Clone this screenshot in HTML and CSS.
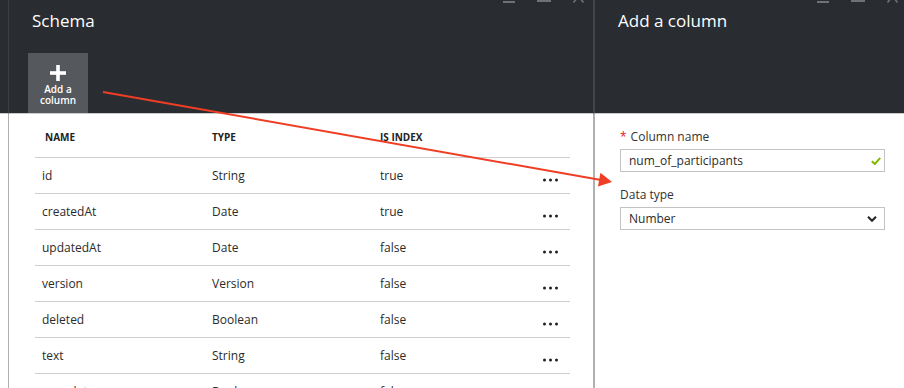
FILE: index.html
```html
<!DOCTYPE html>
<html lang="en">
<head>
    <meta charset="UTF-8">
    <meta name="viewport" content="width=device-width, initial-scale=1.0">
    <title>Schema - Add a column</title>
    <link rel="stylesheet" href="styles.css">
</head>
<body>

<div class="portal">
    <!-- Previous blade, only its edge is showing -->
    <div class="blade blade-stub">
        <div class="blade-header"></div>
        <div class="blade-body"></div>
    </div>

    <!-- Schema blade -->
    <div class="blade blade-schema">
        <div class="blade-header">
            <div class="blade-controls">
                <svg width="12" height="13" viewBox="0 0 12 13"><rect x="0" y="11" width="12" height="2" fill="currentColor"/></svg>
                <svg width="14" height="13" viewBox="0 0 14 13"><rect x="1" y="0" width="12" height="11" fill="none" stroke="currentColor" stroke-width="2"/></svg>
                <svg width="11" height="13" viewBox="0 0 11 13"><path d="M0.5 0 L10.5 12.5 M10.5 0 L0.5 12.5" stroke="currentColor" stroke-width="1.6"/></svg>
            </div>
            <h2 class="blade-title">Schema</h2>
            <button class="command-btn">
                <svg width="16" height="16" viewBox="0 0 16 16"><rect x="6.2" y="0" width="3.6" height="16" fill="#fff"/><rect x="0" y="6.2" width="16" height="3.6" fill="#fff"/></svg>
                <span>Add a<br>column</span>
            </button>
        </div>
        <div class="blade-body">
            <div class="schema-table">
                <div class="schema-row schema-head">
                    <div class="first">NAME</div>
                    <div>TYPE</div>
                    <div>IS INDEX</div>
                    <div></div>
                </div>
                <div class="schema-row">
                    <div>id</div><div>String</div><div>true</div>
                    <svg class="more" width="15" height="4" viewBox="0 0 15 4"><circle cx="1.5" cy="2" r="1.5"/><circle cx="7.5" cy="2" r="1.5"/><circle cx="13.5" cy="2" r="1.5"/></svg>
                </div>
                <div class="schema-row">
                    <div>createdAt</div><div>Date</div><div>true</div>
                    <svg class="more" width="15" height="4" viewBox="0 0 15 4"><circle cx="1.5" cy="2" r="1.5"/><circle cx="7.5" cy="2" r="1.5"/><circle cx="13.5" cy="2" r="1.5"/></svg>
                </div>
                <div class="schema-row">
                    <div>updatedAt</div><div>Date</div><div>false</div>
                    <svg class="more" width="15" height="4" viewBox="0 0 15 4"><circle cx="1.5" cy="2" r="1.5"/><circle cx="7.5" cy="2" r="1.5"/><circle cx="13.5" cy="2" r="1.5"/></svg>
                </div>
                <div class="schema-row">
                    <div>version</div><div>Version</div><div>false</div>
                    <svg class="more" width="15" height="4" viewBox="0 0 15 4"><circle cx="1.5" cy="2" r="1.5"/><circle cx="7.5" cy="2" r="1.5"/><circle cx="13.5" cy="2" r="1.5"/></svg>
                </div>
                <div class="schema-row">
                    <div>deleted</div><div>Boolean</div><div>false</div>
                    <svg class="more" width="15" height="4" viewBox="0 0 15 4"><circle cx="1.5" cy="2" r="1.5"/><circle cx="7.5" cy="2" r="1.5"/><circle cx="13.5" cy="2" r="1.5"/></svg>
                </div>
                <div class="schema-row">
                    <div>text</div><div>String</div><div>false</div>
                    <svg class="more" width="15" height="4" viewBox="0 0 15 4"><circle cx="1.5" cy="2" r="1.5"/><circle cx="7.5" cy="2" r="1.5"/><circle cx="13.5" cy="2" r="1.5"/></svg>
                </div>
                <div class="schema-row">
                    <div>complete</div><div>Boolean</div><div>false</div>
                    <svg class="more" width="15" height="4" viewBox="0 0 15 4"><circle cx="1.5" cy="2" r="1.5"/><circle cx="7.5" cy="2" r="1.5"/><circle cx="13.5" cy="2" r="1.5"/></svg>
                </div>
            </div>
        </div>
    </div>

    <!-- Add a column blade -->
    <div class="blade blade-column">
        <div class="blade-header">
            <div class="blade-controls">
                <svg width="12" height="13" viewBox="0 0 12 13"><rect x="0" y="11" width="12" height="2" fill="currentColor"/></svg>
                <svg width="14" height="13" viewBox="0 0 14 13"><rect x="1" y="0" width="12" height="11" fill="none" stroke="currentColor" stroke-width="2"/></svg>
                <svg width="11" height="13" viewBox="0 0 11 13"><path d="M0.5 0 L10.5 12.5 M10.5 0 L0.5 12.5" stroke="currentColor" stroke-width="1.6"/></svg>
            </div>
            <h2 class="blade-title">Add a column</h2>
        </div>
        <div class="blade-body">
            <form class="column-form">
                <label class="field-label" for="columnName"><span class="required">*</span>Column name</label>
                <div class="field-box">
                    <input type="text" id="columnName" value="num_of_participants">
                    <svg class="valid-icon" width="10" height="8" viewBox="0 0 10 8"><path d="M0.8 4.2 L3.8 7 L9.3 0.8" fill="none" stroke="#7fba00" stroke-width="2"/></svg>
                </div>

                <label class="field-label">Data type</label>
                <div class="field-box select-box">
                    <span>Number</span>
                    <svg class="chevron" width="10" height="6" viewBox="0 0 10 6"><path d="M1 0.8 L5 4.8 L9 0.8" fill="none" stroke="#222" stroke-width="2"/></svg>
                </div>
            </form>
        </div>
    </div>

    <!-- Callout arrow drawn over the blades -->
    <svg class="callout-arrow" width="904" height="388" viewBox="0 0 904 388">
        <line x1="103" y1="92" x2="601" y2="180" stroke="#ef3e24" stroke-width="2"/>
        <polygon points="612,182 600.4,172.8 598,186.6" fill="#ef3e24"/>
    </svg>
</div>

</body>
</html>
```

FILE: styles.css
```css
/* Basic reset */
* {
    margin: 0;
    padding: 0;
    box-sizing: border-box;
}

body {
    font-family: 'Segoe UI', 'Open Sans', sans-serif;
    background-color: #fff;
    color: #2b2b2b;
    overflow: hidden;
}

/* Blades side by side */
.portal {
    position: relative;
    display: flex;
    height: 388px;
    overflow: hidden;
}

.blade {
    display: flex;
    flex-direction: column;
    min-height: 0;
}

.blade-stub {
    width: 8px;
}

.blade-schema {
    width: 585px;
}

.blade-column {
    flex: 1;
}

/* Dark blade header */
.blade-header {
    flex-shrink: 0;
    height: 114px;
    background-color: #292d32;
    border-bottom: 1px solid #c9cacb;
    display: flex;
    flex-direction: column;
    align-items: flex-start;
}

.blade-body {
    flex: 1;
    min-height: 0;
    overflow: hidden;
    background-color: #fff;
}

.blade-schema .blade-header,
.blade-schema .blade-body {
    border-left: 1px solid #3c4045;
}

.blade-schema .blade-body {
    border-left-color: #b1b1b1;
}

.blade-column .blade-header {
    border-left: 2px solid #43474c;
}

.blade-column .blade-body {
    border-left: 2px solid #b1b1b1;
}

/* Minimize / maximize / close, cut off at the top */
.blade-controls {
    flex-shrink: 0;
    align-self: stretch;
    display: flex;
    justify-content: flex-end;
    gap: 22px;
    height: 13px;
    margin-top: -10px;
    padding-right: 9px;
    color: #6e7175;
}

.blade-column .blade-controls {
    padding-right: 6px;
}

.blade-controls svg {
    display: block;
}

.blade-title {
    flex-shrink: 0;
    margin-top: 6px;
    padding-left: 23px;
    font-size: 17px;
    font-weight: 400;
    line-height: 24px;
    color: #fff;
}

/* Command button in the header */
.command-btn {
    flex-shrink: 0;
    margin-top: auto;
    margin-left: 19px;
    width: 60px;
    height: 60px;
    padding-top: 12px;
    border: none;
    background-color: #55585d;
    color: #fff;
    font-family: inherit;
    font-size: 10px;
    font-weight: 600;
    line-height: 11px;
    display: flex;
    flex-direction: column;
    align-items: center;
    cursor: pointer;
}

.command-btn svg {
    display: block;
}

.command-btn span {
    margin-top: 3px;
}

/* Schema table */
.schema-table {
    margin: 0 23px 0 26px;
}

.schema-row {
    display: grid;
    grid-template-columns: 170px 168px 1fr auto;
    align-items: center;
    height: 36px;
    padding: 0 12px 0 7px;
    border-bottom: 1px solid #cfcfcf;
    font-size: 12px;
    line-height: 16px;
}

.schema-head {
    height: 44px;
    align-items: start;
    padding-top: 16px;
    font-size: 10px;
    font-weight: 700;
    line-height: 14px;
    color: #222;
}

.schema-head .first {
    padding-left: 3px;
}

.schema-row .more {
    margin-top: 9px;
    fill: #222;
}

/* Add a column form */
.column-form {
    padding: 15px 19px 0 25px;
}

.field-label {
    display: block;
    margin-bottom: 4px;
    font-size: 12px;
    line-height: 16px;
    color: #333;
}

.required {
    color: #e81123;
    margin-right: 4px;
}

.field-box {
    display: flex;
    align-items: center;
    height: 23px;
    margin-bottom: 15px;
    padding: 0 3px 0 8px;
    border: 1px solid #c3c3c3;
    font-size: 12px;
    color: #2b2b2b;
}

.field-box input {
    flex: 1;
    border: none;
    outline: none;
    background: transparent;
    font-family: inherit;
    font-size: 12px;
    color: #2b2b2b;
}

.select-box {
    justify-content: space-between;
    padding-right: 7px;
}

.field-box svg {
    display: block;
}

/* Red callout arrow */
.callout-arrow {
    position: absolute;
    top: 0;
    left: 0;
    pointer-events: none;
}
```
